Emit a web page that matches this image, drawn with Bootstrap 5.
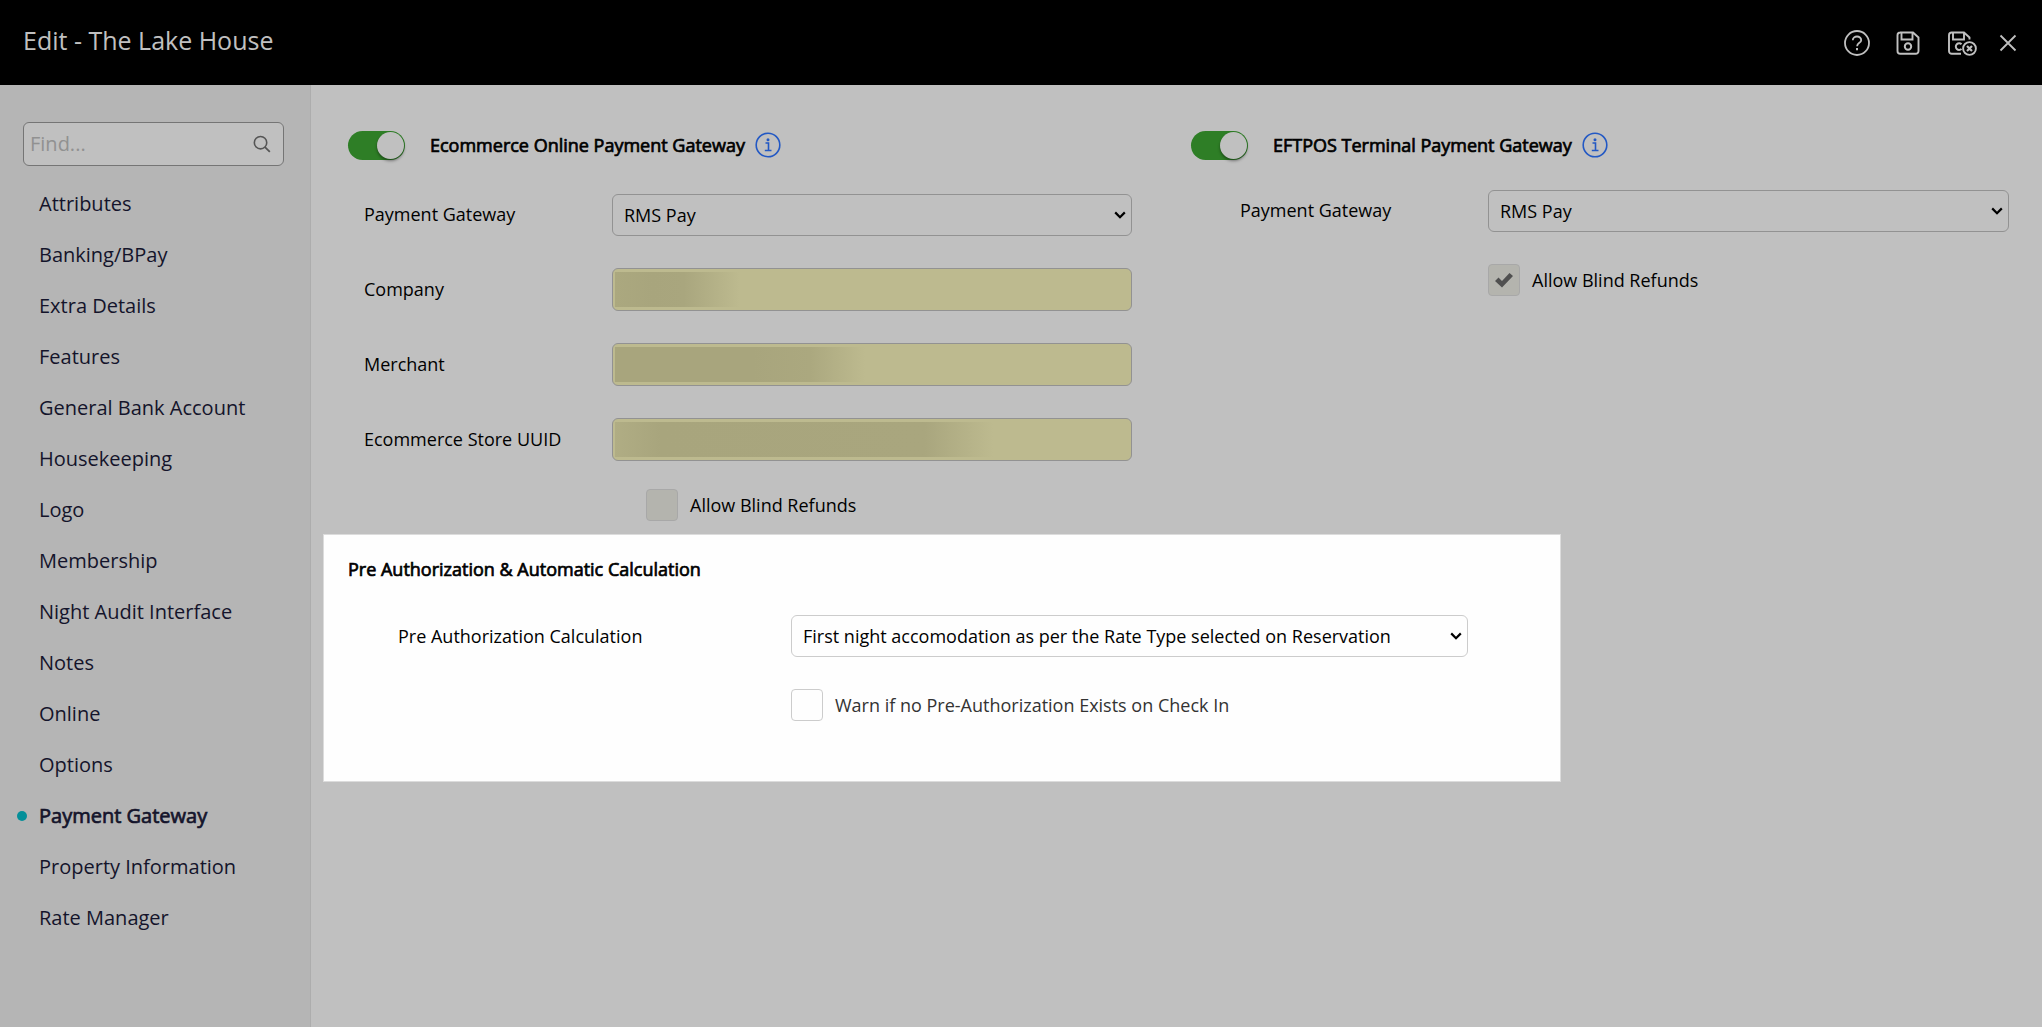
<!DOCTYPE html>
<html lang="en">
<head>
<meta charset="utf-8">
<meta name="viewport" content="width=device-width, initial-scale=1">
<title>Edit - The Lake House</title>
<link href="https://cdn.jsdelivr.net/npm/bootstrap@5.3.0/dist/css/bootstrap.min.css" rel="stylesheet">
<style>
  body { font-family: "Open Sans", sans-serif; font-size: 18px; line-height: 24px; color: #000; background: #c0c0c0; }
  .top-bar { background: #000; color: #c0c0c0; height: 85px; padding: 0 25px 0 23px; }
  .top-title { font-size: 25px; line-height: 34px; font-weight: 400; margin: 0 0 6px; }
  .tool-set { gap: 22px; }
  .tool-btn { background: none; border: 0; padding: 0; color: #c0c0c0; display: flex; }
  .side-panel { width: 311px; flex: none; background: #b5b5b5; border-right: 1px solid #adadad; padding: 37px 26px 0 23px; }
  .find-box { height: 44px; border: 1px solid #757575; border-radius: 6px; background: #c0c0c0; padding: 0 12px 0 6px; }
  .find-box input { background: none; border: 0; outline: 0; padding: 0; min-width: 0; font-size: 20px; color: #14142b; }
  .find-box input::placeholder { color: #919191; opacity: 1; }
  .side-link { display: flex; align-items: center; height: 51px; padding-left: 16px; font-size: 20px; color: #14142b; text-decoration: none; position: relative; }
  .side-link.current, .group-title { -webkit-text-stroke: 0.7px currentColor; }
  .side-link.current::before { content: ""; position: absolute; left: -6px; top: 21px; width: 10px; height: 10px; border-radius: 50%; background: #048f99; }
  .side-list { padding-top: 12px; }
  .main-area { padding: 46px 8px 40px 37px; }
  .group-title { font-size: 18px; line-height: 24px; font-weight: 400; margin: 0; }
  .group-head { height: 29px; }
  .group-head .group-title, .info-btn { margin-bottom: 2px; }
  .toggle-box { appearance: none; width: 57px; height: 29px; border-radius: 15px; background: #2e7e26; margin: 0 25px 0 0; position: relative; flex: none; }
  .toggle-box::after { content: ""; position: absolute; right: 1px; top: 1px; width: 27px; height: 27px; border-radius: 50%; background: #c0c0c0; box-shadow: 0 2px 3px rgba(0,0,0,.4); }
  .info-btn { background: none; border: 0; padding: 0; margin-left: 10px; color: #2258c4; display: flex; }
  .left-group { padding-right: 59px; }
  .left-fields { padding: 34px 0 0 16px; }
  .right-group { padding-right: 25px; }
  .right-fields { padding: 30px 0 0 49px; }
  .field-label { width: 248px; flex: none; padding-bottom: 2px; }
  .field-box { flex: 1; min-width: 0; height: 43px; border: 1px solid #929292; border-radius: 6px; color: #000; font-size: 18px; padding: 0 11px; }
  select.field-box { appearance: none; height: 42px; padding-bottom: 1px; background: transparent url("data:image/svg+xml,%3Csvg xmlns='http://www.w3.org/2000/svg' width='12' height='8'%3E%3Cpath d='M1.2 1.4L6 6.2l4.800-4.800' fill='none' stroke='%23000' stroke-width='2.200'/%3E%3C/svg%3E") no-repeat right 5px center; }
  .masked-wrap { flex: 1; position: relative; display: flex; }
  .masked-wrap .field-box { background: #bdba8f; }
  .masked-wrap span { position: absolute; left: 3px; top: 4px; height: 35px; background: linear-gradient(90deg, #aba87f, #a8a57d 30%, #a9a67e 55%, #bdba8f); pointer-events: none; }
  .masked-wrap .mask-sm { width: 125px; }
  .masked-wrap .mask-md { width: 250px; background: linear-gradient(90deg, #a8a57d, #a8a57d 55%, #aba87f 78%, #bdba8f); }
  .masked-wrap .mask-lg { width: 378px; background: linear-gradient(90deg, #b0ad84, #a8a57d 12%, #a9a67e 82%, #bdba8f); }
  .stack-fields { display: flex; flex-direction: column; gap: 32px; }
  .tick-box { appearance: none; width: 32px; height: 32px; border: 1px solid #a8a8a8; border-radius: 4px; background: #b4b4ae; margin: 0 12px 0 0; flex: none; }
  .tick-box:checked { background: #b4b4ae url("data:image/svg+xml,%3Csvg xmlns='http://www.w3.org/2000/svg' width='18' height='16'%3E%3Cpath d='M0 9l3.500-3.500L7 9 14.500 1 18 4 7 15.500z' fill='%23505050'/%3E%3C/svg%3E") no-repeat center; }
  .tick-left { padding: 28px 0 0 282px; }
  .tick-right { padding: 32px 0 0 248px; }
  .bright-panel { background: #fefefe; border: 1px solid #dcdcdc; width: 73.4%; margin: 13px 0 0 -25px; padding: 22px 92px 60px 24px; }
  .bright-panel .field-box { border-color: #ccc; }
  .bright-fields { padding: 34px 0 0 50px; }
  .bright-fields .field-label { width: 393px; padding-bottom: 0; }
  .bright-panel .tick-box { background: #fefefe; border-color: #ccc; }
  .tick-bright { padding: 32px 0 0 393px; color: #333; }
</style>
<script src="https://cdn.jsdelivr.net/npm/bootstrap@5.3.0/dist/js/bootstrap.bundle.min.js"></script>
</head>
<body class="d-flex flex-column min-vh-100">
<header class="top-bar d-flex align-items-center justify-content-between">
  <h1 class="top-title">Edit - The Lake House</h1>
  <div class="tool-set d-flex align-items-center">
    <button class="tool-btn" type="button" aria-label="Help">
      <svg width="28" height="28" viewBox="0 0 28 28" fill="none" stroke="currentColor" stroke-width="1.800"><circle cx="14" cy="14" r="12"/><path d="M9.800 11.300c0-5.200 8.600-4.900 8.400-.1-.1 2.700-4 2.600-4.100 6"/><path d="M14 19v2.200" stroke-width="2"/></svg>
    </button>
    <button class="tool-btn" type="button" aria-label="Save">
      <svg width="30" height="28" viewBox="0 0 30 28" fill="none" stroke="currentColor" stroke-width="1.900"><path d="M7 3.500h13l5.500 5v13.500a2.800 2.800 0 0 1-2.800 2.800H7.300a2.800 2.800 0 0 1-2.800-2.800V6.300a2.800 2.800 0 0 1 2.800-2.800M8.500 3.500v7h11v-7"/><circle cx="15" cy="17.500" r="3.200" stroke-width="2"/></svg>
    </button>
    <button class="tool-btn" type="button" aria-label="Save and close">
      <svg width="32" height="28" viewBox="0 0 32 28" fill="none" stroke="currentColor" stroke-width="1.900"><path d="M16 24.800H6.800A2.800 2.800 0 0 1 4 22V6.300a2.800 2.800 0 0 1 2.800-2.800h12.200l5.500 5v2M8 3.500v7h11v-7"/><path d="M16.500 15.300a3.300 3.300 0 1 0 0 4.600" stroke-width="2"/><circle cx="24.500" cy="19.500" r="6.400"/><path d="M22 17l5 5m0-5l-5 5" stroke-width="2.200"/></svg>
    </button>
    <button class="tool-btn" type="button" aria-label="Close">
      <svg width="18" height="18" viewBox="0 0 18 18" fill="none" stroke="currentColor" stroke-width="1.800"><path d="M1.500 1.500l15 15M16.500 1.500l-15 15"/></svg>
    </button>
  </div>
</header>
<div class="d-flex flex-grow-1">
  <nav class="side-panel" aria-label="Sections">
    <div class="find-box d-flex align-items-center">
      <input class="flex-grow-1" type="search" placeholder="Find..." aria-label="Find">
      <svg width="20" height="20" viewBox="0 0 20 20" fill="none" stroke="#555" stroke-width="1.800"><circle cx="8.500" cy="8.500" r="7"/><path d="M13.500 13.500l5.500 5.500" stroke-width="2"/></svg>
    </div>
    <div class="side-list">
      <a class="side-link" href="#">Attributes</a>
      <a class="side-link" href="#">Banking/BPay</a>
      <a class="side-link" href="#">Extra Details</a>
      <a class="side-link" href="#">Features</a>
      <a class="side-link" href="#">General Bank Account</a>
      <a class="side-link" href="#">Housekeeping</a>
      <a class="side-link" href="#">Logo</a>
      <a class="side-link" href="#">Membership</a>
      <a class="side-link" href="#">Night Audit Interface</a>
      <a class="side-link" href="#">Notes</a>
      <a class="side-link" href="#">Online</a>
      <a class="side-link" href="#">Options</a>
      <a class="side-link current" href="#" aria-current="page">Payment Gateway</a>
      <a class="side-link" href="#">Property Information</a>
      <a class="side-link" href="#">Rate Manager</a>
    </div>
  </nav>
  <main class="main-area flex-grow-1">
    <div class="row g-0">
      <section class="col-6 left-group">
        <div class="group-head d-flex align-items-center">
          <input class="toggle-box" type="checkbox" role="switch" id="ecomOn" checked>
          <label class="group-title" for="ecomOn">Ecommerce Online Payment Gateway</label>
          <button class="info-btn" type="button" aria-label="About the online gateway"><svg width="26" height="26" viewBox="0 0 26 26" fill="none" stroke="currentColor" stroke-width="1.600"><circle cx="13" cy="13" r="11.800"/><path d="M10.500 11H13.500v7.500M9.800 18.500h6.700"/><circle cx="13" cy="7.800" r=".7" fill="currentColor"/></svg></button>
        </div>
        <div class="left-fields stack-fields">
          <div class="d-flex align-items-center">
            <label class="field-label" for="ecomGateway">Payment Gateway</label>
            <select class="field-box" id="ecomGateway"><option>RMS Pay</option></select>
          </div>
          <div class="d-flex align-items-center">
            <label class="field-label" for="company">Company</label>
            <div class="masked-wrap"><input class="field-box" id="company" type="text"><span class="mask-sm"></span></div>
          </div>
          <div class="d-flex align-items-center">
            <label class="field-label" for="merchant">Merchant</label>
            <div class="masked-wrap"><input class="field-box" id="merchant" type="text"><span class="mask-md"></span></div>
          </div>
          <div class="d-flex align-items-center">
            <label class="field-label" for="storeId">Ecommerce Store UUID</label>
            <div class="masked-wrap"><input class="field-box" id="storeId" type="text"><span class="mask-lg"></span></div>
          </div>
        </div>
        <div class="tick-left d-flex align-items-center ms-3">
          <input class="tick-box" type="checkbox" id="ecomBlind">
          <label for="ecomBlind">Allow Blind Refunds</label>
        </div>
      </section>
      <section class="col-6 right-group">
        <div class="group-head d-flex align-items-center">
          <input class="toggle-box" type="checkbox" role="switch" id="eftposOn" checked>
          <label class="group-title" for="eftposOn">EFTPOS Terminal Payment Gateway</label>
          <button class="info-btn" type="button" aria-label="About the terminal gateway"><svg width="26" height="26" viewBox="0 0 26 26" fill="none" stroke="currentColor" stroke-width="1.600"><circle cx="13" cy="13" r="11.800"/><path d="M10.500 11H13.500v7.500M9.800 18.500h6.700"/><circle cx="13" cy="7.800" r=".7" fill="currentColor"/></svg></button>
        </div>
        <div class="right-fields">
          <div class="d-flex align-items-center">
            <label class="field-label" for="eftposGateway">Payment Gateway</label>
            <select class="field-box" id="eftposGateway"><option>RMS Pay</option></select>
          </div>
          <div class="tick-right d-flex align-items-center">
            <input class="tick-box" type="checkbox" id="eftposBlind" checked>
            <label for="eftposBlind">Allow Blind Refunds</label>
          </div>
        </div>
      </section>
    </div>
    <section class="bright-panel">
      <h2 class="group-title">Pre Authorization &amp; Automatic Calculation</h2>
      <div class="bright-fields">
        <div class="d-flex align-items-center">
          <label class="field-label" for="preAuth">Pre Authorization Calculation</label>
          <select class="field-box" id="preAuth"><option>First night accomodation as per the Rate Type selected on Reservation</option></select>
        </div>
        <div class="tick-bright d-flex align-items-center">
          <input class="tick-box" type="checkbox" id="warnPreAuth">
          <label for="warnPreAuth">Warn if no Pre-Authorization Exists on Check In</label>
        </div>
      </div>
    </section>
  </main>
</div>
</body>
</html>
